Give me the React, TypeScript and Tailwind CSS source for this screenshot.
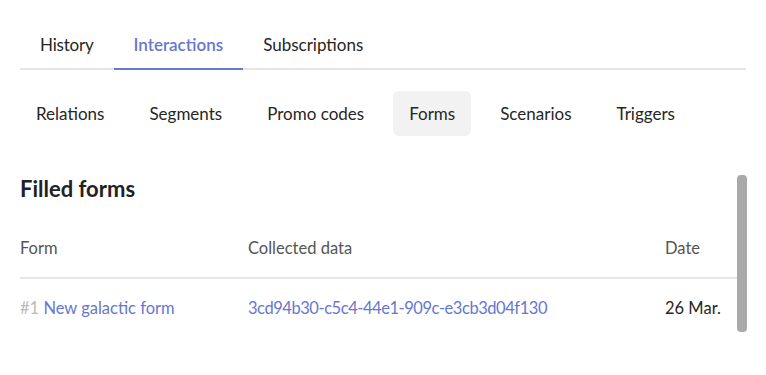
import React, { useState } from 'react';

const topTabs = ['History', 'Interactions', 'Subscriptions'];
const subTabs = ['Relations', 'Segments', 'Promo codes', 'Forms', 'Scenarios', 'Triggers'];

const App: React.FC = () => {
    const [tab, setTab] = useState<string>('Interactions');
    const [subTab, setSubTab] = useState<string>('Forms');

    return (
        <div className="w-[766px] h-[375px] bg-white overflow-hidden px-5 pt-[21px] font-['Lato','Liberation_Sans',sans-serif] text-[17px] text-[#262626]">
            {/* main tabs */}
            <div className="flex border-b-2 border-[#e6e6e6] w-[726px]">
                {topTabs.map((t) => (
                    <button
                        key={t}
                        onClick={() => setTab(t)}
                        className={`h-[49px] px-5 -mb-[2px] border-b-2 ${tab === t
                            ? 'border-[#6677d1] text-[#6677d1] font-semibold'
                            : 'border-transparent text-[#262626]'
                            } ${t === 'History' ? 'tracking-[-0.2px]' : ''}`}
                    >
                        {t}
                    </button>
                ))}
            </div>

            {/* sub tabs */}
            <div className="flex gap-[13px] mt-[21px]">
                {subTabs.map((t) => (
                    <button
                        key={t}
                        onClick={() => setSubTab(t)}
                        className={`h-[45px] px-4 rounded-md text-[#262626] ${subTab === t ? 'bg-[#f2f2f2]' : ''}`}
                    >
                        {t}
                    </button>
                ))}
            </div>

            {/* filled forms */}
            <div className="flex mt-[36px] w-[727px]">
                <div className="flex-1 text-[16.5px]">
                    <h2 className="h-[32px] flex items-center text-[22px] font-bold text-[#222]">Filled forms</h2>
                    <div className="mt-[15px] flex items-center h-[60px] border-b-2 border-[#e6e6e6] text-[#555]">
                        <div className="w-[228px]">Form</div>
                        <div className="w-[417px]">Collected data</div>
                        <div className="flex-1">Date</div>
                    </div>
                    <div className="flex items-center h-[58px]">
                        <div className="w-[228px]">
                            <span className="text-[#bbb]">#1 </span>
                            <a href="#" className="text-[#6677d1]">New galactic form</a>
                        </div>
                        <div className="w-[417px]">
                            <a href="#" className="text-[#6677d1] tracking-[-0.45px]">3cd94b30-c5c4-44e1-909c-e3cb3d04f130</a>
                        </div>
                        <div className="flex-1 text-[#262626]">26 Mar.</div>
                    </div>
                </div>
                {/* scrollbar */}
                <div className="w-[10px] pt-[3px]">
                    <div className="h-[157px] w-[10px] rounded-[4px] bg-[#a9a9a9]" />
                </div>
            </div>
        </div>
    );
};

export default App;
